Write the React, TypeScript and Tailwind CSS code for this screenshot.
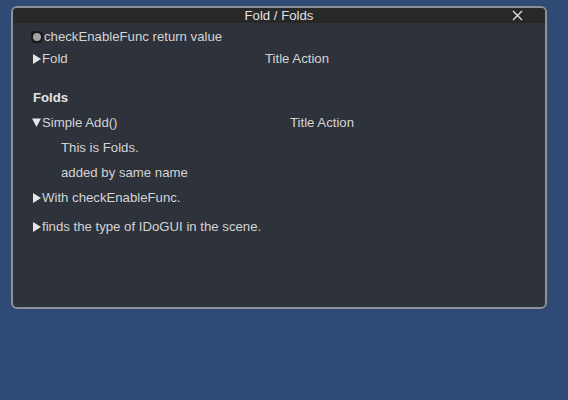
const Arrow = ({ open }: { open?: boolean }) =>
  open ? (
    <svg width="9" height="9" viewBox="0 0 9 9" className="mr-[1px] shrink-0">
      <polygon points="0,0.5 9,0.5 4.5,9" fill="#e6e6e6" />
    </svg>
  ) : (
    <svg width="8" height="10" viewBox="0 0 8 10" className="mr-[1px] shrink-0">
      <polygon points="0,0 8,5 0,10" fill="#e6e6e6" />
    </svg>
  );

const Row = ({ children, className = "" }: { children: React.ReactNode; className?: string }) => (
  <div className={`flex items-center whitespace-nowrap ${className}`}>{children}</div>
);

export default function App() {
  return (
    <div
      className="h-[400px] w-[568px] bg-[#2f4a74] pl-[11px] pt-[6px] text-[13.2px] text-[#d4d4d4]"
      style={{ fontFamily: '"Liberation Sans", Arial, sans-serif' }}
    >
      <div className="h-[303px] w-[536px] overflow-hidden rounded-[6px] border-2 border-[#8b9099] bg-[#2e323b]">
        <div className="relative h-[15px] bg-[#282828] text-center leading-[15px] text-[#e2e2e2]">
          Fold / Folds
          <svg width="11" height="11" viewBox="0 0 11 11" className="absolute right-[22px] top-[2px]">
            <path d="M1 1 L10 10 M10 1 L1 10" stroke="#e0e0e0" strokeWidth="1.4" />
          </svg>
        </div>
        <div className="pl-[18px] pt-[3px]">
          <Row className="h-[22px]">
            <span className="mr-[1px] flex h-[12px] w-[12px] items-center justify-center rounded-[4px] bg-[#1a1a1a]">
              <span className="h-[8px] w-[8px] rounded-full bg-[#a3a3a3]" />
            </span>
            checkEnableFunc return value
          </Row>
          <Row className="h-[22px] pl-[2px]">
            <span className="flex w-[232px] items-center">
              <Arrow />
              Fold
            </span>
            Title Action
          </Row>
          <Row className="mt-[17px] h-[22px] pl-[2px] font-bold text-[#e4e4e4]">Folds</Row>
          <Row className="mt-[1px] h-[25px] pl-[1px]">
            <span className="flex w-[258px] items-center">
              <Arrow open />
              Simple Add()
            </span>
            Title Action
          </Row>
          <Row className="h-[25px] pl-[30px]">This is Folds.</Row>
          <Row className="h-[25px] pl-[30px]">added by same name</Row>
          <Row className="h-[25px] pl-[2px]">
            <Arrow />
            With checkEnableFunc.
          </Row>
          <Row className="mt-[5px] h-[24px] pl-[2px]">
            <Arrow />
            finds the type of IDoGUI in the scene.
          </Row>
        </div>
      </div>
    </div>
  );
}
